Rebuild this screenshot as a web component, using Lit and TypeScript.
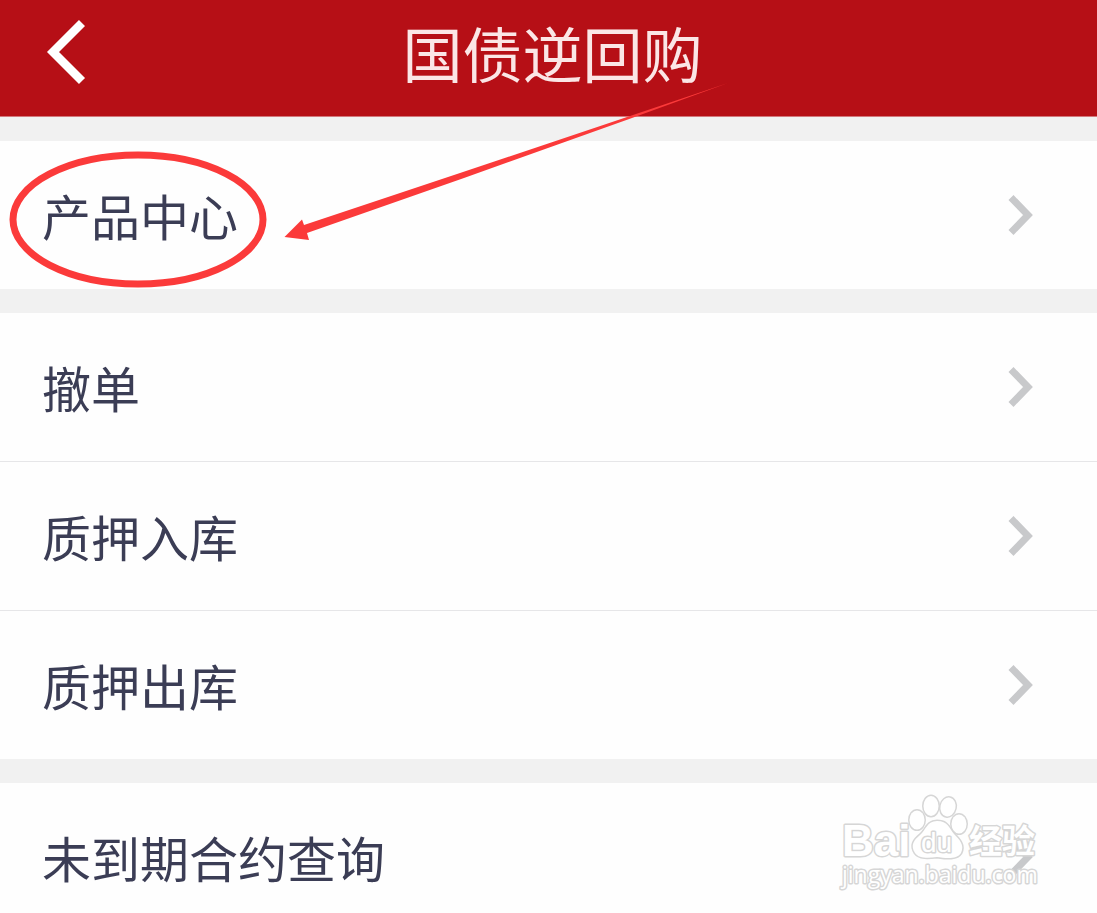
import { LitElement, html, css } from "lit";
import { customElement } from "lit/decorators.js";

const groups: string[][] = [
  ["产品中心"],
  ["撤单", "质押入库", "质押出库"],
  ["未到期合约查询"],
];

@customElement("menu-row")
export class MenuRow extends LitElement {
  static styles = css`
    :host {
      display: block;
    }
    .row {
      box-sizing: border-box;
      display: flex;
      align-items: center;
      justify-content: space-between;
      width: 100%;
      padding: 39px 63px 39px 42px;
      color: #3b3d55;
      font-size: 49px;
      line-height: 70px;
      text-decoration: none;
    }
    .chevron {
      flex: none;
      display: block;
      width: 28px;
      height: 42px;
    }
  `;

  render() {
    return html`
      <a class="row" href="#">
        <slot></slot>
        <svg class="chevron" viewBox="0 0 28 42" aria-hidden="true">
          <path d="M5 3.500 L22 21 L5 38.500" fill="none" stroke="#c8c9cb" stroke-width="7" />
        </svg>
      </a>
    `;
  }
}

@customElement("app-root")
export class AppRoot extends LitElement {
  static styles = css`
    :host {
      display: block;
      position: relative;
      height: 100vh;
      overflow: hidden;
      background: #fefefe;
      font-family: "Noto Sans CJK SC", sans-serif;
    }
    .header {
      display: grid;
      grid-template-columns: 104px 1fr 96px;
      align-items: center;
      padding: 8px 0 20px;
      background: #b60f16;
      border-bottom: 1px solid #d3787c;
    }
    .back {
      display: block;
      padding: 0 0 0 44px;
      border: 0;
      background: none;
      cursor: pointer;
    }
    .back-icon {
      display: block;
      width: 44px;
      height: 72px;
    }
    .title {
      margin: 0;
      color: #fbe6e6;
      font-size: 60px;
      font-weight: 400;
      line-height: 88px;
      text-align: center;
      white-space: nowrap;
    }
    .group {
      margin: 0;
      padding: 0;
      border-top: 24px solid #f1f1f1;
      list-style: none;
    }
    .item + .item {
      border-top: 1px solid #e6e6e8;
    }
    .annotation {
      position: absolute;
      top: 0;
      left: 0;
      width: 740px;
      height: 300px;
      pointer-events: none;
    }
    .watermark {
      position: absolute;
      top: 790px;
      right: 47px;
      width: 220px;
      height: 110px;
      pointer-events: none;
    }
    .mark {
      fill: #ffffff;
      stroke: #d6d6d6;
      stroke-width: 3px;
      stroke-linejoin: round;
      paint-order: stroke;
    }
    .brand {
      font-family: "Liberation Sans", sans-serif;
      font-size: 44px;
      font-weight: 700;
    }
    .du {
      font-family: "Liberation Sans", sans-serif;
      font-size: 28px;
      font-weight: 400;
    }
    .cjk {
      font-family: "Noto Sans CJK SC", sans-serif;
      font-size: 33px;
      font-weight: 700;
    }
    .domain {
      font-family: "Open Sans", sans-serif;
      font-size: 23px;
    }
  `;

  render() {
    return html`
      <header class="header">
        <button class="back" aria-label="返回">
          <svg class="back-icon" viewBox="0 0 44 72" aria-hidden="true">
            <path d="M38 7 L9 36 L38 65" fill="none" stroke="#fff" stroke-width="8.500" />
          </svg>
        </button>
        <h1 class="title">国债逆回购</h1>
      </header>
      <main>
        ${groups.map(
          (items) => html`
            <ul class="group">
              ${items.map((label) => html`<li class="item"><menu-row>${label}</menu-row></li>`)}
            </ul>
          `
        )}
      </main>
      <svg class="annotation" viewBox="0 0 740 300" aria-hidden="true">
        <ellipse cx="138" cy="219.500" rx="125" ry="64.500" fill="none" stroke="#fb3a3a" stroke-width="7" />
        <path d="M284.500 237 L302 219.500 L304 225 L460 173 L630 116 L728 83 L632 118 L464 178 L307 233 L309 240 Z" fill="#fb3a3a" />
      </svg>
      <svg class="watermark" viewBox="0 0 220 110" aria-hidden="true">
        <text class="mark brand" x="12" y="66">Bai</text>
        <ellipse class="mark" cx="87" cy="30" rx="7.500" ry="9.500" />
        <ellipse class="mark" cx="101" cy="16" rx="7.500" ry="10" />
        <ellipse class="mark" cx="118" cy="17" rx="7.500" ry="9.500" transform="rotate(12 118 17)" />
        <ellipse class="mark" cx="129" cy="34" rx="7.500" ry="9.500" />
        <path class="mark" d="M107 31 C97 31 96 40 90 45 C84 50 80 55 85 63 C89 69 99 68 107 67 C115 68 127 70 131 63 C135 55 129 49 124 44 C119 38 118 31 107 31 Z" />
        <text class="mark du" x="91" y="62">du</text>
        <text class="mark cjk" x="139" y="63">经验</text>
        <text class="mark domain" x="12" y="93">jingyan.baidu.com</text>
      </svg>
    `;
  }
}
